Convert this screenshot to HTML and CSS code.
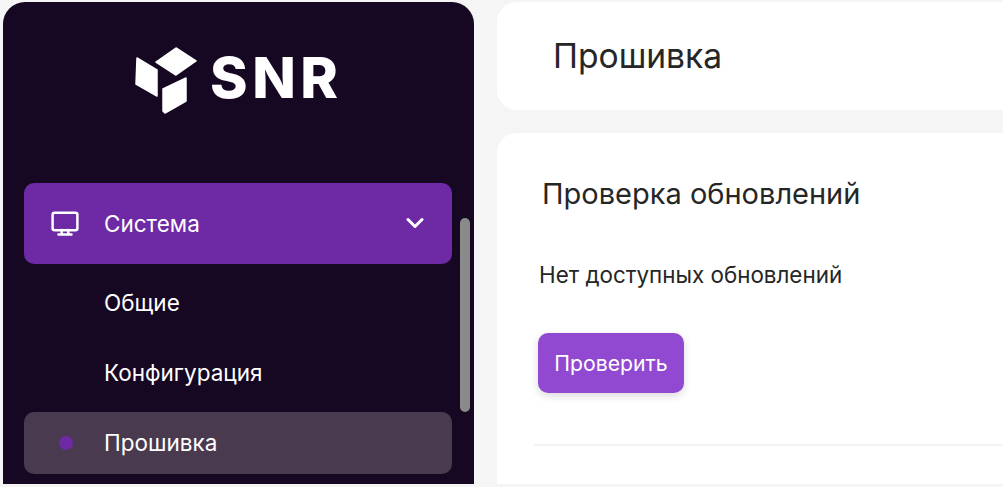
FILE: index.html
```html
<!DOCTYPE html>
<html lang="ru">
<head>
  <meta charset="UTF-8">
  <meta name="viewport" content="width=device-width, initial-scale=1.0">
  <title>Прошивка</title>
  <link rel="stylesheet" href="styles.css">
</head>
<body>
  <div class="layout">
    <aside class="sidebar">
      <div class="logo">
        <svg class="logo-mark" width="64" height="68" viewBox="0 0 64 68" aria-hidden="true">
          <polygon points="41,2 61,15 41,29 21,16"/>
          <polygon points="2,12 22,24 22,50 1,38"/>
          <polygon points="51,32 51,55 30,67 28,65 28,43"/>
        </svg>
        <span class="logo-text">SNR</span>
      </div>

      <nav class="menu">
        <div class="menu-item menu-item-open">
          <svg class="menu-icon" width="30" height="28" viewBox="0 0 30 28" aria-hidden="true">
            <rect x="2.6" y="3.8" width="24.8" height="17.4" rx="2"/>
            <path d="M11.7 21v4M18.3 21v4M8.5 25.5h13"/>
          </svg>
          <span class="menu-label">Система</span>
          <svg class="menu-arrow" width="18" height="12" viewBox="0 0 18 12" aria-hidden="true">
            <path d="M2 2.5l7 7 7-7"/>
          </svg>
        </div>
        <div class="menu-item">Общие</div>
        <div class="menu-item">Конфигурация</div>
        <div class="menu-item menu-item-current">
          <span class="menu-dot"></span>
          Прошивка
        </div>
      </nav>

      <div class="scroll-thumb"></div>
    </aside>

    <main class="content">
      <header class="page-head">
        <h1>Прошивка</h1>
      </header>

      <section class="card">
        <h2>Проверка обновлений</h2>
        <p>Нет доступных обновлений</p>
        <button class="check-btn">Проверить</button>
        <div class="divider"></div>
      </section>
    </main>
  </div>
</body>
</html>
```

FILE: styles.css
```css
* {
  margin: 0;
  padding: 0;
  box-sizing: border-box;
}

html,
body {
  height: 100%;
  overflow: hidden;
}

body {
  font-family: Inter, "Noto Sans", sans-serif;
  background: #f5f5f5;
  color: #262626;
}

.layout {
  display: flex;
  gap: 23px;
  height: 100%;
  padding: 2px 0 3px 3px;
}

.sidebar {
  position: relative;
  flex: 0 0 471px;
  padding: 0 22px 0 21px;
  background: #160823;
  border-radius: 22px 22px 0 0;
  overflow: hidden;
}

.logo {
  display: flex;
  align-items: center;
  gap: 12px;
  height: 181px;
  padding: 0 0 26px 111px;
}

.logo-mark {
  flex: none;
}

.logo-mark polygon {
  fill: #fff;
  stroke: #fff;
  stroke-width: 1.5;
  stroke-linejoin: round;
}

.logo-text {
  margin: 0 0 4px -1px;
  color: #fff;
  font-size: 57px;
  font-weight: 800;
  line-height: 1;
  letter-spacing: 4.5px;
}

.menu {
  display: flex;
  flex-direction: column;
  gap: 8px;
}

.menu-item {
  display: flex;
  align-items: center;
  height: 62px;
  padding-left: 80px;
  border-radius: 10px;
  color: #fff;
  font-size: 22.5px;
}

.menu-item-open {
  height: 80.5px;
  padding-left: 26px;
  background: #6e29a5;
}

.menu-item-current {
  padding-left: 35px;
  background: #4a3a4f;
}

.menu-icon {
  flex: none;
  margin-right: 24px;
  fill: none;
  stroke: #fff;
  stroke-width: 2.5;
  stroke-linejoin: round;
  stroke-linecap: round;
}

.menu-label {
  flex: 1;
}

.menu-arrow {
  flex: none;
  margin-right: 28px;
  fill: none;
  stroke: #fff;
  stroke-width: 3;
  stroke-linecap: round;
  stroke-linejoin: round;
}

.menu-dot {
  flex: none;
  width: 14px;
  height: 14px;
  margin-right: 31px;
  border-radius: 50%;
  background: #6e29a5;
}

.scroll-thumb {
  position: absolute;
  top: 216px;
  left: 457px;
  width: 10px;
  height: 194px;
  border-radius: 5px;
  background: #8a8a8a;
}

.content {
  flex: 1;
  display: flex;
  flex-direction: column;
  gap: 23px;
  min-width: 0;
}

.page-head {
  height: 108px;
  padding: 35px 0 0 56px;
  background: #fff;
  border-radius: 20px 0 0 20px;
}

h1 {
  font-size: 33.6px;
  font-weight: 400;
  line-height: 38px;
}

.card {
  flex: 1;
  padding: 45px 0 0 37px;
  background: #fff;
  border-radius: 20px 0 0 0;
}

h2 {
  margin-left: 8px;
  font-size: 29px;
  font-weight: 400;
  line-height: 32px;
}

.card p {
  margin: 52px 0 0 5px;
  font-size: 22.4px;
  line-height: 26px;
}

.check-btn {
  display: block;
  width: 146px;
  height: 60px;
  margin: 45px 0 0 4px;
  border: none;
  border-radius: 10px;
  background: #9049d0;
  box-shadow: 0 3px 8px rgba(0, 0, 0, 0.15);
  color: #fff;
  font-family: inherit;
  font-size: 21.2px;
}

.divider {
  height: 2px;
  margin-top: 51px;
  background: #f3f3f3;
}
```
